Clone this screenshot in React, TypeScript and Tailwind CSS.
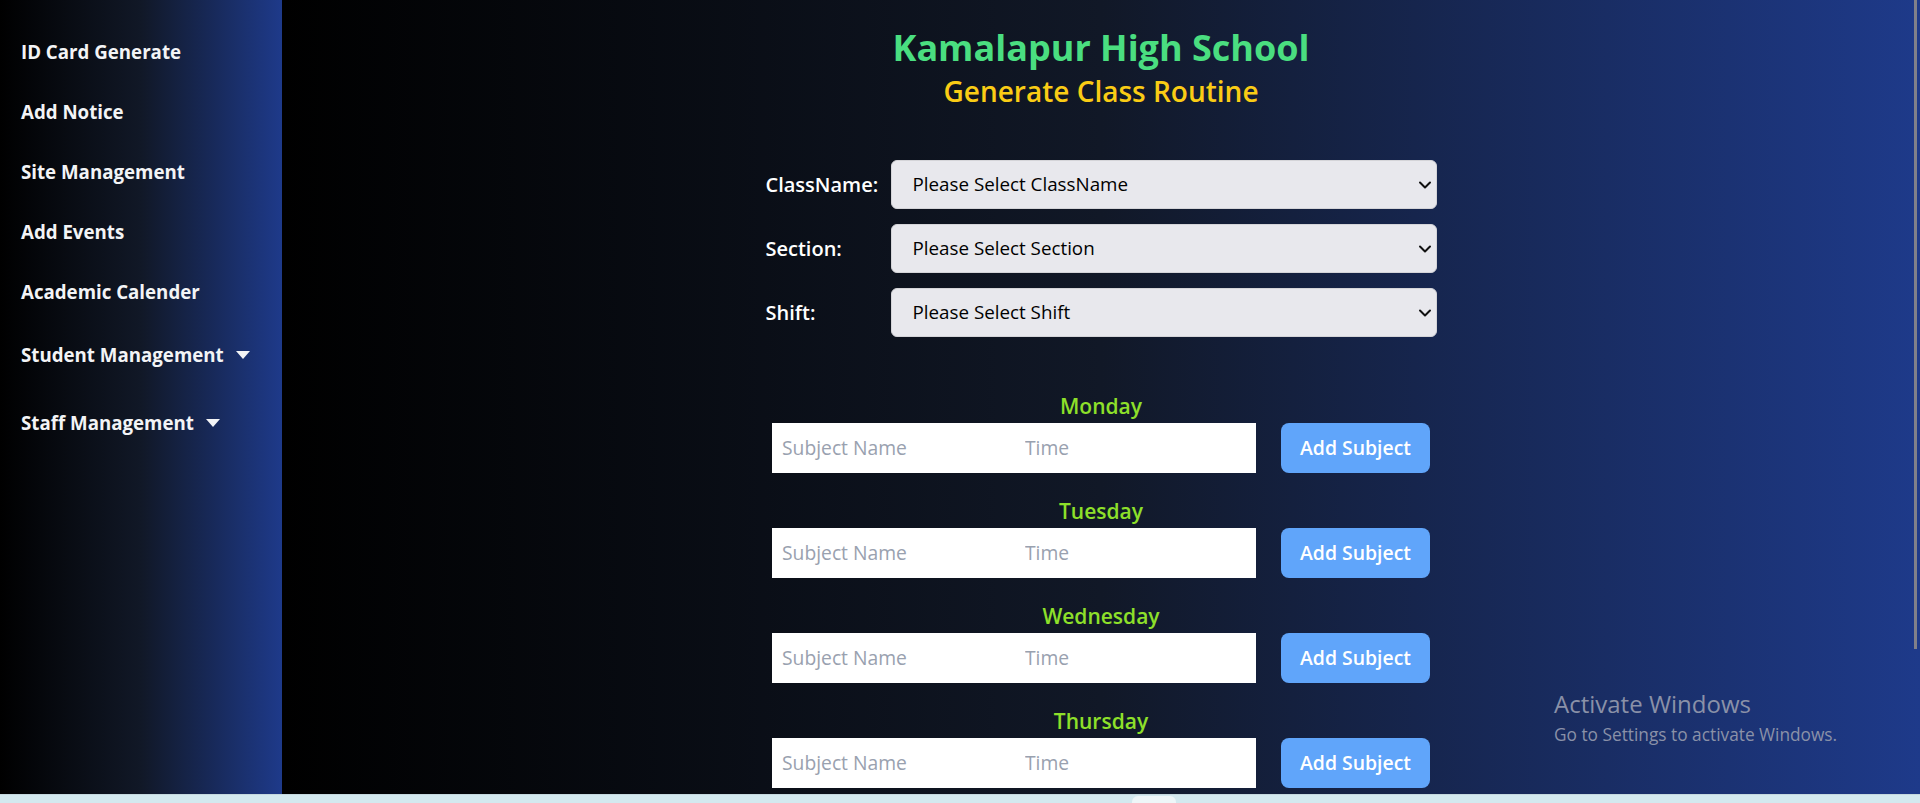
import { useState } from "react";
import { ChevronDown } from "lucide-react";

const menu = ["ID Card Generate", "Add Notice", "Site Management", "Add Events", "Academic Calender"];
const days = ["Monday", "Tuesday", "Wednesday", "Thursday"];

function Caret() {
  return (
    <svg width="14" height="8" viewBox="0 0 14 8" className="ml-3 fill-gray-100">
      <path d="M0 0h14L7 8z" />
    </svg>
  );
}

function Sidebar() {
  return (
    <aside className="w-[282px] shrink-0 bg-linear-to-r/srgb from-black via-[#111827] to-[#1e3a8a] pl-[21px] pt-[38px]">
      <ul className="flex flex-col gap-8 text-[18.7px] font-bold text-gray-100">
        {menu.map((item) => (
          <li key={item} className="leading-7">
            {item}
          </li>
        ))}
        <li className="mt-[3px] flex items-center leading-7">
          Student Management <Caret />
        </li>
        <li className="mt-[8px] flex items-center leading-7">
          Staff Management <Caret />
        </li>
      </ul>
    </aside>
  );
}

function DaySection({ day }: { day: string }) {
  return (
    <div className="flex flex-col items-center">
      <h3 className="mb-[3px] text-[21px] font-semibold leading-7 text-[#8ee02a]">{day}</h3>
      <div className="flex items-center gap-[25px]">
        <div className="flex h-[50px] w-[484px] bg-white">
          <input
            type="text"
            placeholder="Subject Name"
            className="w-1/2 px-[10px] text-[19.3px] text-gray-700 outline-none placeholder:text-gray-400"
          />
          <input
            type="text"
            placeholder="Time"
            className="w-1/2 px-[11px] text-[19.3px] text-gray-700 outline-none placeholder:text-gray-400"
          />
        </div>
        <button
          type="button"
          className="h-[50px] w-[149px] rounded-lg bg-[#60a5fa] text-[19.4px] font-semibold text-white"
        >
          Add Subject
        </button>
      </div>
    </div>
  );
}

function SelectRow({ label, placeholder }: { label: string; placeholder: string }) {
  const [value, setValue] = useState("");
  return (
    <>
      <label className="text-xl font-semibold text-white">{label}</label>
      <div className="relative">
        <select
          value={value}
          onChange={(e) => setValue(e.target.value)}
          className="h-[49px] w-full appearance-none rounded-md border border-[#d4d4d8] bg-[#e8e8ed] pl-[21px] pr-8 text-[18.8px] text-black"
        >
          <option value="">{placeholder}</option>
        </select>
        <ChevronDown
          size={20}
          strokeWidth={2.4}
          className="pointer-events-none absolute right-[2px] top-1/2 -translate-y-1/2 text-[#111]"
        />
      </div>
    </>
  );
}

export default function App() {
  return (
    <div className="flex h-[803px] flex-col overflow-hidden font-['Open_Sans','Noto_Sans',sans-serif]">
      <div className="flex min-h-0 flex-1">
        <Sidebar />
        <main className="relative flex-1 overflow-hidden bg-linear-to-r/srgb from-black via-[#111827] to-[#1e3a8a]">
          <div className="flex flex-col items-center pt-[28px]">
            <h1 className="text-4xl font-bold text-[#4ade80]">Kamalapur High School</h1>
            <h2 className="mt-[5px] text-[28px] font-semibold leading-9 text-[#facc15]">Generate Class Routine</h2>

            <form className="mt-[51px] flex flex-col items-center">
              <div className="grid grid-cols-[125px_546px] items-center gap-y-[15px]">
                <SelectRow label="ClassName:" placeholder="Please Select ClassName" />
                <SelectRow label="Section:" placeholder="Please Select Section" />
                <SelectRow label="Shift:" placeholder="Please Select Shift" />
              </div>

              <div className="mt-[55px] flex flex-col gap-[24px]">
                {days.map((d) => (
                  <DaySection key={d} day={d} />
                ))}
              </div>
            </form>
          </div>

          <div className="absolute right-[3px] top-0 h-[649px] w-[3px] bg-[#80808a]" />

          <div className="pointer-events-none absolute left-[1272px] top-[688px] text-[#8a91a8]">
            <p className="text-2xl leading-8">Activate Windows</p>
            <p className="mt-[3px] text-[17.3px] leading-6">Go to Settings to activate Windows.</p>
          </div>
        </main>
      </div>
      <div className="flex h-[9px] shrink-0 justify-center border-t border-[#c4d8de] bg-[#d3e9ef] pl-[388px]">
        <div className="mt-[1px] h-[8px] w-[44px] rounded-t-md bg-[#eef6f8]" />
      </div>
    </div>
  );
}
